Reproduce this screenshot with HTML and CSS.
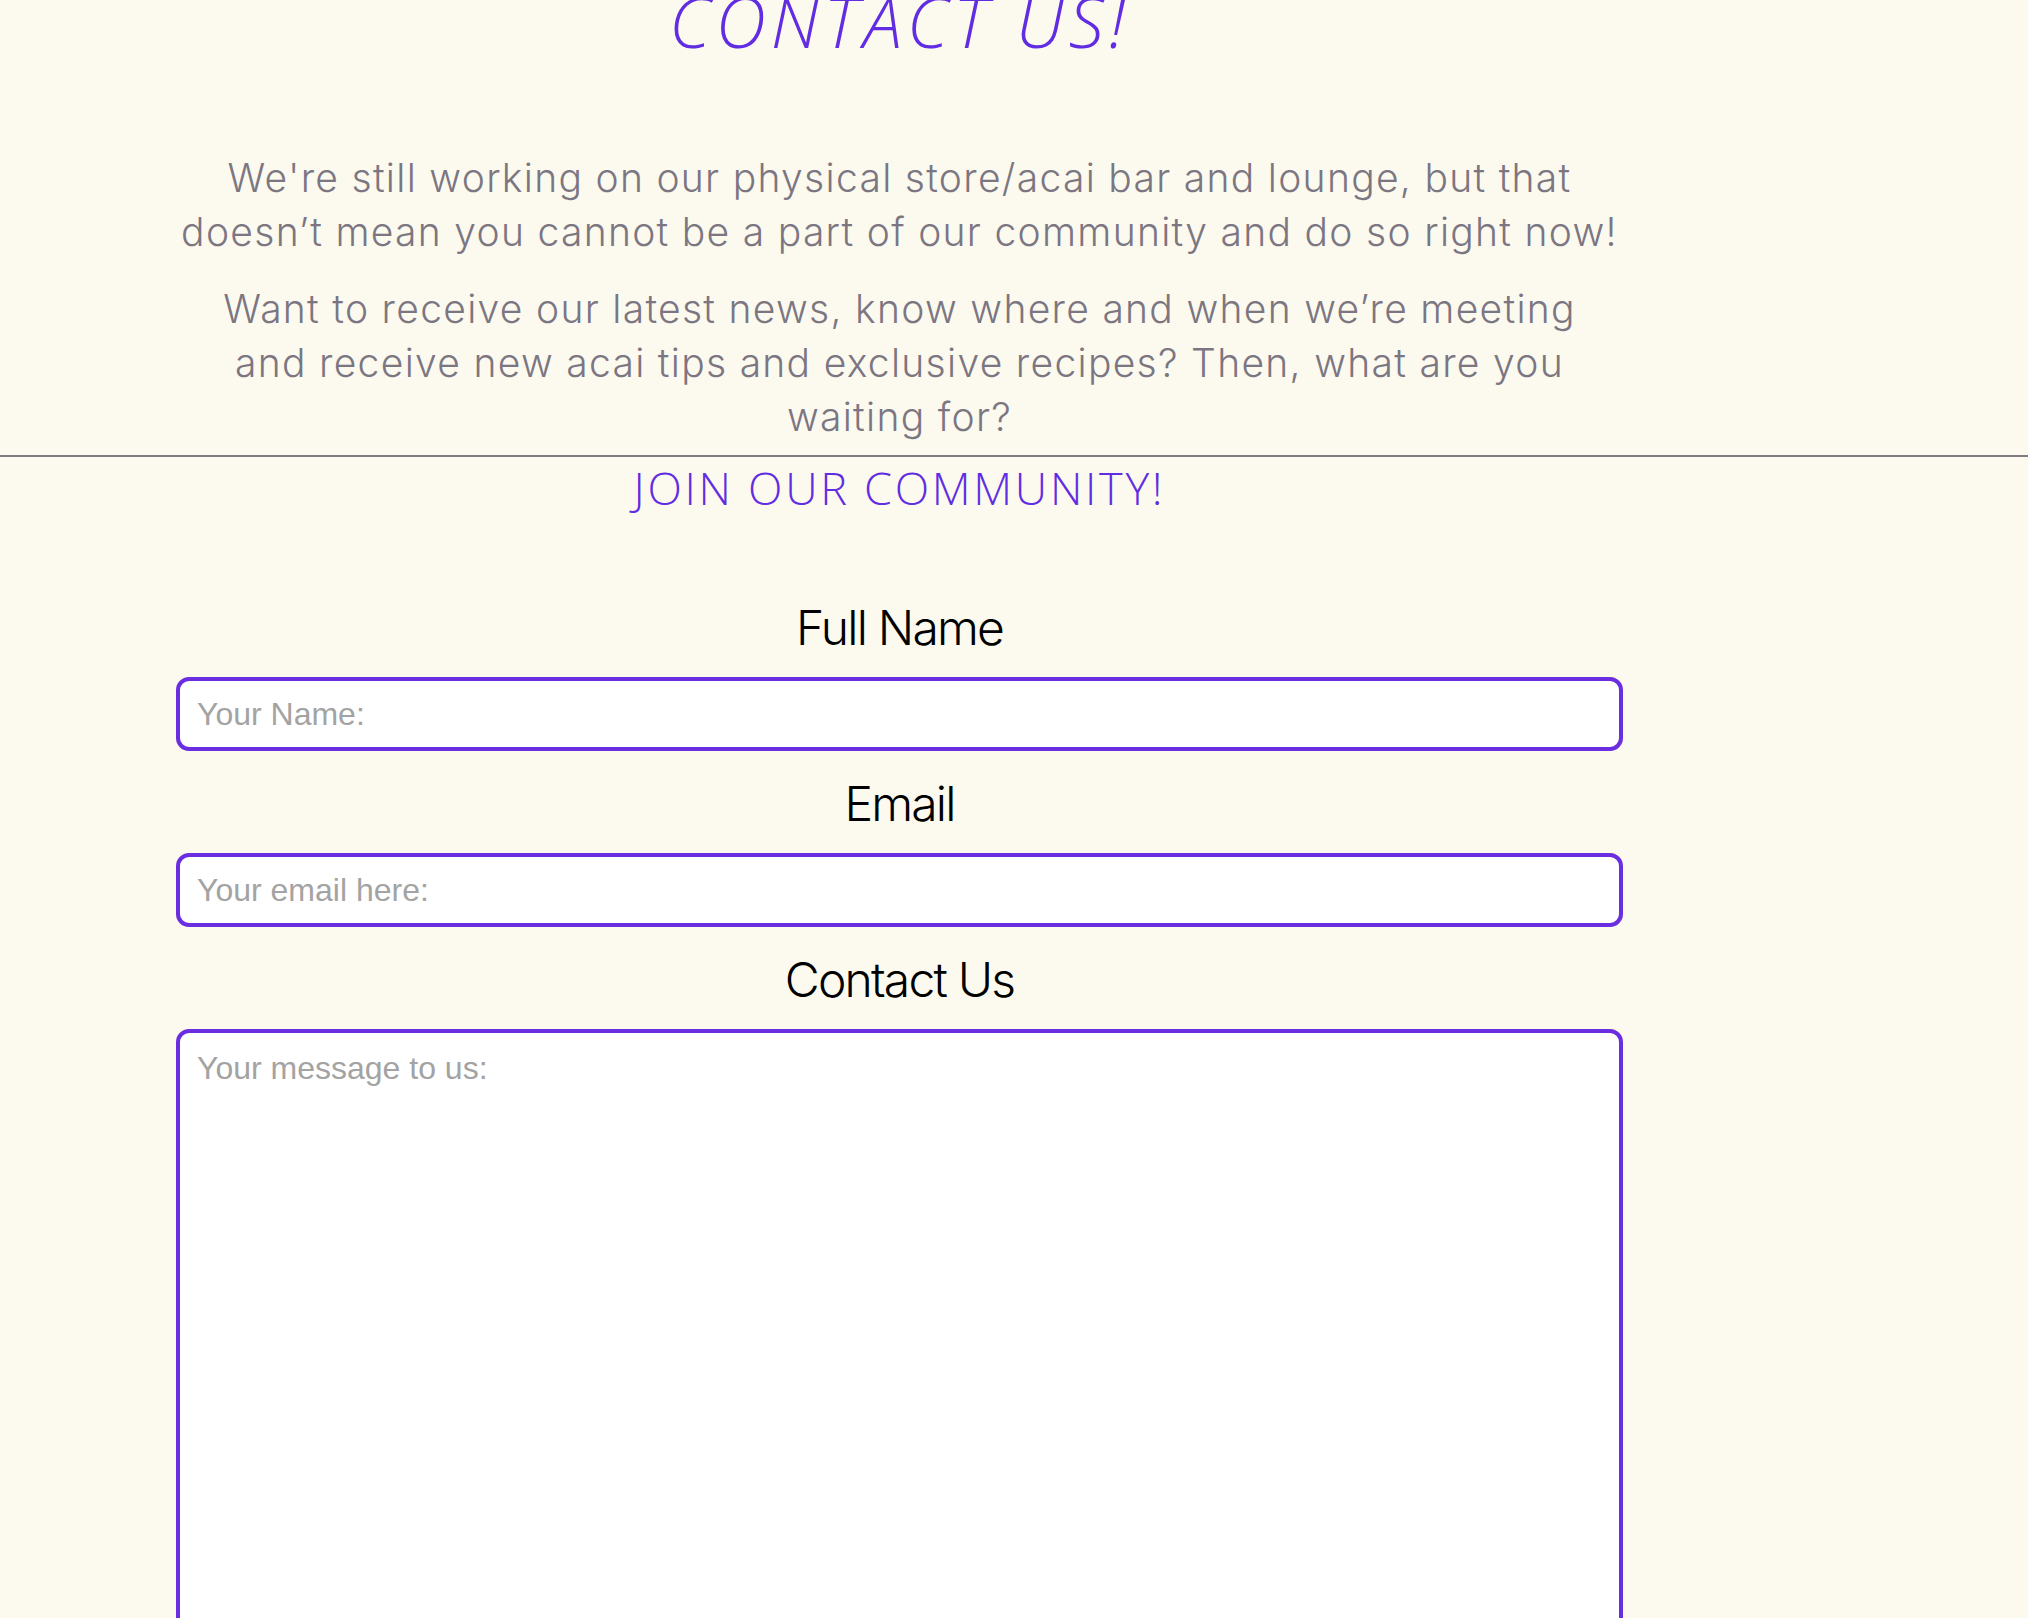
FILE: index.html
```html
<!DOCTYPE html>
<html lang="en">
<head>
<meta charset="utf-8">
<title>Contact Us</title>
<link rel="stylesheet" href="styles.css">
</head>
<body>
<main class="page">
  <section class="intro">
    <h1 class="title">CONTACT US!</h1>
    <p class="lead lead-first">We're still working on our physical store/acai bar and lounge, but that<br>doesn’t mean you cannot be a part of our community and do so right now!</p>
    <p class="lead">Want to receive our latest news, know where and when we’re meeting<br>and receive new acai tips and exclusive recipes? Then, what are you<br>waiting for?</p>
  </section>
  <hr class="divider">
  <section class="community">
    <h2 class="join">JOIN OUR COMMUNITY!</h2>
    <form class="form">
      <label class="field-label" for="name">Full Name</label>
      <input class="field" id="name" type="text" placeholder="Your Name:">
      <label class="field-label" for="email">Email</label>
      <input class="field" id="email" type="email" placeholder="Your email here:">
      <label class="field-label" for="msg">Contact Us</label>
      <textarea class="field field-area" id="msg" placeholder="Your message to us:"></textarea>
    </form>
  </section>
</main>
</body>
</html>
```
FILE: styles.css
```css
html, body {
  margin: 0;
  padding: 0;
  background: #fcfaee;
  overflow: hidden;
}

.page {
  display: flex;
  flex-direction: column;
}

.intro,
.community {
  margin-left: 176px;
  width: 1447px;
  text-align: center;
}

.title {
  margin: -21px 0 0;
  font-family: "Open Sans", sans-serif;
  font-style: italic;
  font-weight: 300;
  font-size: 70px;
  line-height: 84px;
  letter-spacing: 5px;
  color: #622de2;
}

.lead {
  margin: 23px 0 0;
  font-family: "Inter", sans-serif;
  font-weight: 300;
  font-size: 39px;
  line-height: 54px;
  letter-spacing: 1.3px;
  color: #7b7682;
}

.lead-first {
  margin-top: 88px;
}

.divider {
  margin: 11px 0 0;
  border: none;
  height: 2px;
  background: #807b80;
  width: 100%;
}

.join {
  margin: 4px 0 60px;
  font-family: "Open Sans", sans-serif;
  font-weight: 300;
  font-size: 45px;
  line-height: 54px;
  letter-spacing: 2.7px;
  color: #622de2;
}

.form {
  display: flex;
  flex-direction: column;
}

.field-label {
  display: block;
  margin: 22px 0 18px;
  font-family: "Inter", sans-serif;
  font-weight: 300;
  font-size: 48px;
  line-height: 62px;
  letter-spacing: -1.8px;
  color: #000;
}

.field {
  box-sizing: border-box;
  width: 100%;
  height: 74px;
  margin: 0;
  padding: 0 17px;
  border: 4px solid #6b2de0;
  border-radius: 13px;
  background: #fff;
  font-family: "Liberation Sans", Arial, sans-serif;
  font-size: 32px;
  color: #333;
  outline: none;
}

.field::placeholder {
  color: #a3a3a3;
  opacity: 1;
}

.field-area {
  height: 640px;
  padding: 17px;
  resize: none;
  line-height: normal;
}
```
